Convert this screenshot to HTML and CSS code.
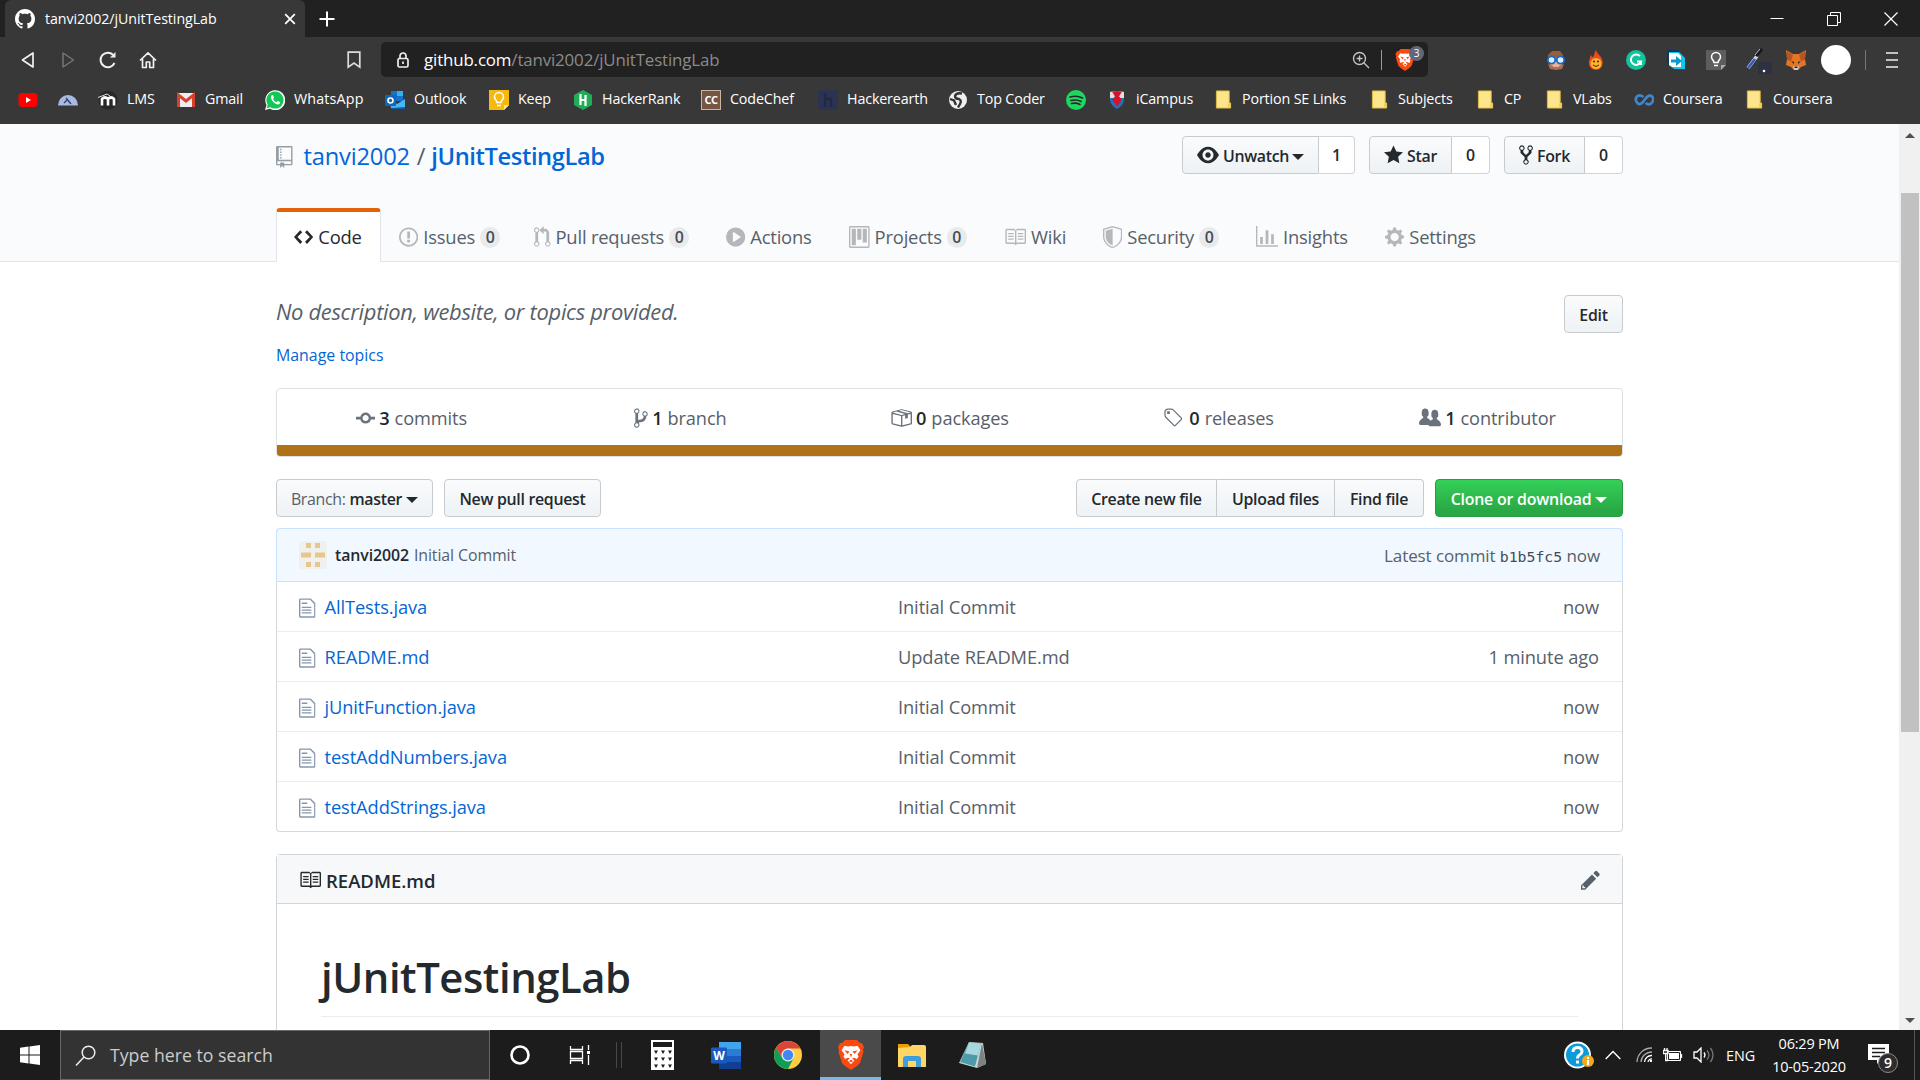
FILE: index.html
```html
<!DOCTYPE html>
<html lang="en">
<head>
<meta charset="utf-8">
<title>tanvi2002/jUnitTestingLab</title>
<link rel="stylesheet" href="styles.css">
</head>
<body>
<svg class="defs" aria-hidden="true">
  <symbol id="file" viewBox="0 0 12 16"><path d="M6 5H2V4h4v1zM2 8h7V7H2v1zm0 2h7V9H2v1zm0 2h7v-1H2v1zm10-7.5V14c0 .55-.45 1-1 1H1c-.55 0-1-.45-1-1V2c0-.55.45-1 1-1h7.5L12 4.5zM11 5L8 2H1v12h10V5z"/></symbol>
  <symbol id="book" viewBox="0 0 16 16"><path d="M3 5h4v1H3V5zm0 3h4V7H3v1zm0 2h4V9H3v1zm11-5h-4v1h4V5zm0 2h-4v1h4V7zm0 2h-4v1h4V9zm2-6v9c0 .55-.45 1-1 1H9.5l-1 1-1-1H2c-.55 0-1-.45-1-1V3c0-.55.45-1 1-1h5.5l1 1 1-1H15c.55 0 1 .45 1 1zm-8 .5L7.5 3H2v9h6V3.5zm7-.5H9.5l-.5.5V12h6V3z"/></symbol>
  <symbol id="folder" viewBox="0 0 17 20"><path d="M1 1h13.500v13h1.500v5h-15z" fill="#fde58c" stroke="#e0b93f" stroke-width="1"/><path d="M13 19v-4l3-2v6z" fill="#f3cf5d"/></symbol>
  <symbol id="brave" viewBox="0 0 26 30"><path d="M7 0h12l3 3 2 0 2 4-1 3 .5 2-3.500 11-3 3-6 4-6-4-3-3L.5 12 1 10 0 7l2-4h2z" fill="#fb4a10"/><path d="M13 6l3 .5 3.500-.7 3 4.500-3 4 1 2.200-1.500 2.500-3-1.200-2 .7 2.500 1.800-3.500 4-3.500-4 2.500-1.800-2-.7-3 1.200-1.500-2.500 1-2.200-3-4 3-4.500L10 6.500z" fill="#fff"/><path d="M6.500 10.200l5 1.300-2 2.500zM19.500 10.200l-5 1.300 2 2.500zM11.800 14h2.400L13 17.500zM11 21l2-1.200 2 1.200-2 1.500z" fill="#fb4a10"/></symbol>
</svg>

<header class="browser">
  <div class="tabstrip">
    <div class="tab">
      <svg width="20" height="20" viewBox="0 0 16 16" fill="#fff"><path d="M8 0C3.580 0 0 3.580 0 8c0 3.540 2.290 6.530 5.470 7.590.4.070.55-.17.55-.38 0-.19-.01-.82-.01-1.490-2.010.37-2.530-.49-2.690-.94-.09-.23-.48-.94-.82-1.130-.28-.15-.68-.52-.01-.53.63-.01 1.080.58 1.230.82.72 1.210 1.870.87 2.330.66.070-.52.28-.87.51-1.070-1.780-.2-3.640-.89-3.640-3.950 0-.87.31-1.590.82-2.150-.08-.2-.36-1.020.08-2.120 0 0 .67-.21 2.200.82.64-.18 1.320-.27 2-.27.68 0 1.360.09 2 .27 1.530-1.040 2.200-.82 2.200-.82.44 1.100.16 1.920.08 2.120.51.56.82 1.270.82 2.150 0 3.070-1.870 3.750-3.650 3.950.29.25.54.73.54 1.480 0 1.070-.01 1.930-.01 2.200 0 .21.15.46.55.38A8.013 8.013 0 0016 8c0-4.420-3.580-8-8-8z"/></svg>
      <span class="tab-title">tanvi2002/jUnitTestingLab</span>
      <svg width="12" height="12" viewBox="0 0 12 12" stroke="#fff" stroke-width="1.800"><path d="M1.200 1.200l9.600 9.600M10.800 1.200l-9.600 9.600"/></svg>
    </div>
    <svg class="new-tab" width="16" height="16" viewBox="0 0 16 16" stroke="#fff" stroke-width="2"><path d="M8 .5v15M.5 8h15"/></svg>
    <div class="window-buttons">
      <svg width="14" height="14" viewBox="0 0 14 14" stroke="#fff"><path d="M.5 6.500h13"/></svg>
      <svg width="14" height="14" viewBox="0 0 14 14" stroke="#fff" fill="none"><path d="M.5 3.500h10v10H.5zM3.500 3.500v-3h10v10h-3"/></svg>
      <svg width="14" height="14" viewBox="0 0 14 14" stroke="#fff" stroke-width="1.200"><path d="M.5.5l13 13M13.500.5l-13 13"/></svg>
    </div>
  </div>

  <div class="toolbar">
    <div class="nav-buttons">
      <svg width="20" height="20" viewBox="0 0 20 20" fill="none" stroke="#f0f0f0" stroke-width="1.700" stroke-linejoin="round"><path d="M15 3v14L4.500 10z"/></svg>
      <svg width="20" height="20" viewBox="0 0 20 20" fill="none" stroke="#757575" stroke-width="1.500" stroke-linejoin="round"><path d="M5 3v14l10.500-7z"/></svg>
      <svg width="20" height="20" viewBox="0 0 20 20" fill="none" stroke="#f0f0f0" stroke-width="2"><path d="M16.500 13A7.300 7.300 0 1 1 15 4.800"/><path d="M12 7.500h5.500V2z" fill="#f0f0f0" stroke="none"/></svg>
      <svg width="20" height="20" viewBox="0 0 20 20" fill="none" stroke="#f0f0f0" stroke-width="1.700" stroke-linejoin="round"><path d="M2 10.500L10 2.800l8 7.700M4.500 9v8.500h3.800V12h3.400v5.500h3.800V9"/></svg>
    </div>
    <svg class="save" width="14" height="18" viewBox="0 0 14 18" fill="none" stroke="#dcdcdc" stroke-width="1.700"><path d="M1.200 1.200h11.600v15L7 12l-5.800 4.200z"/></svg>
    <div class="address">
      <svg width="12" height="16" viewBox="0 0 12 16" fill="none" stroke="#eee" stroke-width="1.700"><rect x="1" y="6.500" width="10" height="8.500" rx="1.500"/><path d="M3 6.500V4a3 3 0 0 1 6 0v2.500M6 9.500v2.500"/></svg>
      <span class="url">github.com<span class="url-path">/tanvi2002/jUnitTestingLab</span></span>
      <svg width="18" height="18" viewBox="0 0 18 18" fill="none" stroke="#c4c4c4" stroke-width="1.400"><circle cx="7.500" cy="7.500" r="6"/><path d="M12 12l5 5M4.500 7.500h6M7.500 4.500v6"/></svg>
      <span class="address-sep"></span>
      <span class="shield"><svg width="20" height="22"><use href="#brave"/></svg><span class="shield-count">3</span></span>
    </div>
    <div class="extensions">
      <svg width="20" height="20" viewBox="0 0 20 20"><path d="M2 10V5l4-4h8l3 4 1 5z" fill="#9a5d39"/><path d="M4 8h12v8l-6 4-6-4z" fill="#f1b08c"/><path d="M2 14l2 5 6 1 6-1 2-5-5 2H7z" fill="#ad6b5b"/><path d="M7 14h6v3H7z" fill="#f1b08c"/><circle cx="5.500" cy="10" r="3.700" fill="#dfeeff" stroke="#1669c5" stroke-width="1.800"/><circle cx="14.500" cy="10" r="3.700" fill="#dfeeff" stroke="#1669c5" stroke-width="1.800"/></svg>
      <svg width="20" height="20" viewBox="0 0 20 20"><path d="M10 0c1 4 6 6 6.500 11 1 6-3 9-6.500 9s-8-3-7-9C4 9 4 6 5 5c1 2 1 2 2 2 2-2 1-5 3-7z" fill="#f04a18"/><circle cx="10" cy="13.500" r="5.500" fill="#ffb526"/><path d="M7 15q3 3 6 0" stroke="#422" fill="none"/><circle cx="8" cy="11.500" r="1" fill="#422"/><circle cx="12" cy="11.500" r="1" fill="#422"/></svg>
      <svg width="20" height="20" viewBox="0 0 20 20"><circle cx="10" cy="10" r="10" fill="#12c29b"/><path d="M14 6.200A5.200 5.200 0 1 0 15 11.500h-4M15 11.500v3.500" fill="none" stroke="#fff" stroke-width="2"/></svg>
      <svg width="20" height="20" viewBox="0 0 20 20"><path d="M1 0h12v3H4v12H1z" fill="#0c3a66"/><path d="M3 2h10l6 6v11H8l-5-4z" fill="#10c8ee"/><path d="M3 3h9l3 3v11H6l-3-2z" fill="#fff"/><path d="M5 9.500h5V6l6 5-6 5v-3.500H5z" fill="#079bce"/></svg>
      <svg width="20" height="20" viewBox="0 0 20 20"><path d="M0 0h20v15l-5 5H0z" fill="#5d5d5d"/><path d="M20 15h-5v5z" fill="#aaa"/><path d="M8 12.500c0-2-2.500-3-2.500-5.500a4.500 4.500 0 0 1 9 0c0 2.500-2.500 3.500-2.500 5.500zM8 15.500h4" fill="none" stroke="#fff" stroke-width="1.500"/></svg>
      <svg width="28" height="28" viewBox="0 0 28 28"><rect x="14" y="16" width="14" height="14" rx="2" fill="#2d3142"/><path d="M4 22L13 10" stroke="#cdd6e8" stroke-width="3.600"/><path d="M4 22l7-9" stroke="#3358c6" stroke-width="2.600"/><path d="M12 10l6-7" stroke="#161616" stroke-width="3"/><path d="M11 9l5-6" stroke="#b8bec9" stroke-width="1"/><circle cx="20" cy="25" r="1.300" fill="#fff"/></svg>
      <svg width="20" height="20" viewBox="0 0 20 20"><path d="M0 0l7 4h6l7-4-1 9 1 6-5 2-3 3H8l-3-3-5-2 1-6z" fill="#e37625"/><path d="M1 1l6 4-2 6-4-1zM19 1l-6 4 2 6 4-1z" fill="#b65622"/><path d="M5 11l3 1 0 2zM15 11l-3 1v2z" fill="#222"/><path d="M7 16h6l-1 4H8z" fill="#d9c7bd"/><path d="M8.500 16.500h3v1.500h-3z" fill="#222"/></svg>
      <span class="profile"></span>
    </div>
    <span class="toolbar-sep"></span>
    <svg width="12" height="18" viewBox="0 0 12 18" stroke="#eee" stroke-width="1.600"><path d="M0 2h12M0 9h12M0 16h12"/></svg>
  </div>

  <nav class="bookmarks">
    <a><svg width="20" height="20" viewBox="0 0 20 20"><rect x=".5" y="3" width="19" height="14" rx="4" fill="#f00"/><path d="M8 7l5 3-5 3z" fill="#fff"/></svg></a>
    <a><svg width="20" height="20" viewBox="0 0 20 20"><path d="M0 15.500a10 10.500 0 0 1 20 0z" fill="#a9b9e4"/><path d="M8 8l5 6M10 9l-4 4" stroke="#39466e" stroke-width="1.500"/></svg></a>
    <a><svg width="20" height="20" viewBox="0 0 20 20"><circle cx="10" cy="10" r="9.500" fill="#282828"/><path d="M4 15.500V9q3-3 6 0v6.500M10 9q3-3 6 0v6.500" stroke="#fff" stroke-width="2.600" fill="none"/><path d="M0 7.500l9-3.500 3 2" stroke="#ddd" fill="none"/></svg><span>LMS</span></a>
    <a><svg width="20" height="20" viewBox="0 0 20 20"><rect x="1" y="3" width="18" height="14" rx="1.500" fill="#eee"/><path d="M2.500 17V5l7.500 6 7.500-6v12" stroke="#d8402f" stroke-width="3" fill="none"/></svg><span>Gmail</span></a>
    <a><svg width="20" height="20" viewBox="0 0 20 20"><path d="M0 20l1.500-5A10 10 0 1 1 5 18.700z" fill="#fff"/><path d="M1.700 18.300l1-3.700A8.600 8.600 0 1 1 5.400 17.300z" fill="#14c655"/><path d="M7 5c-3 2 1 9 6 9.500 1.500 0 2.300-1.500 2-2.500l-2.200-1-1.300 1.200Q9 11.500 8 8.700l1-1L8 5z" fill="#fff"/></svg><span>WhatsApp</span></a>
    <a><svg width="20" height="20" viewBox="0 0 20 20"><path d="M6 1h12v10H6z" fill="#1474cc"/><path d="M12 1h6v5h-6z" fill="#33b0ed"/><path d="M5 10l7 4 8-5v9H6z" fill="#46b8f1"/><path d="M6 18l14-1v2H6z" fill="#155ba8"/><rect y="5" width="11" height="11" rx="1" fill="#0b68bd"/><circle cx="5.500" cy="10.500" r="2.500" fill="none" stroke="#fff" stroke-width="1.600"/></svg><span>Outlook</span></a>
    <a><svg width="20" height="20" viewBox="0 0 20 20"><path d="M0 0h20v15l-5 5H0z" fill="#f7b90e"/><path d="M20 15h-5v5z" fill="#ffe59b"/><path d="M8 12.500c0-2-2.500-3-2.500-5.500a4.500 4.500 0 0 1 9 0c0 2.500-2.500 3.500-2.500 5.500zM8 15.500h4" fill="none" stroke="#fff" stroke-width="1.500"/></svg><span>Keep</span></a>
    <a><svg width="20" height="20" viewBox="0 0 20 20"><path d="M10 0l9 5v10l-9 5-9-5V5z" fill="#1fae56"/><path d="M7.500 4v11M12.500 5v11M7.500 10h5" stroke="#fff" stroke-width="2.200"/></svg><span>HackerRank</span></a>
    <a><svg width="20" height="20" viewBox="0 0 20 20"><rect x=".5" y=".5" width="19" height="19" fill="#765643" stroke="#cbb5a5"/><text x="10" y="13.500" text-anchor="middle" font-size="11" font-weight="700" fill="#fff" letter-spacing="-.5">CC</text></svg><span>CodeChef</span></a>
    <a><svg width="20" height="20" viewBox="0 0 20 20"><rect width="20" height="20" rx="1" fill="#2b3350"/><path d="M7 3v14M7 9h6v8" stroke="#202845" stroke-width="2.500" fill="none"/></svg><span>Hackerearth</span></a>
    <a><svg width="20" height="20" viewBox="0 0 20 20"><circle cx="10" cy="10" r="9" fill="#efefef"/><path d="M14 3.500q-6-1-7 2.500 0 3 4 3 3 1.500 1 5l-2 3.500M2 9l4 1.500L8 15" stroke="#333" stroke-width="2.400" fill="none"/></svg><span>Top Coder</span></a>
    <a><svg width="20" height="20" viewBox="0 0 20 20"><circle cx="10" cy="10" r="10" fill="#1ed760"/><path d="M4 7q7-2 12.500 1M5 10.500q6-1.500 10 1M5.500 13.500q5-1 8.500 1" stroke="#272727" stroke-width="1.600" fill="none" stroke-linecap="round"/></svg></a>
    <a><svg width="20" height="20" viewBox="0 0 20 20"><path d="M3 2q7-2 14 0v8q-1 6-7 9-6-3-7-9z" fill="#2472b6"/><path d="M3 2q7-2 14 0v6H3z" fill="#e2ded9"/><path d="M5 1.500q5-1 10 0l-3 5 3 3-5 7-5-7 3-3z" fill="#d2142d"/></svg><span>iCampus</span></a>
    <a class="dir"><svg width="19" height="19"><use href="#folder"/></svg><span>Portion SE Links</span></a>
    <a class="dir"><svg width="19" height="19"><use href="#folder"/></svg><span>Subjects</span></a>
    <a class="dir"><svg width="19" height="19"><use href="#folder"/></svg><span>CP</span></a>
    <a class="dir"><svg width="19" height="19"><use href="#folder"/></svg><span>VLabs</span></a>
    <a><svg width="20" height="20" viewBox="0 0 20 20"><path d="M9.500 7q-4-3-6.500-.5t0 6 6-.5l3-4q3.500-4 6-1.500t0 6-6.500.5" fill="none" stroke="#3f86cc" stroke-width="2.700"/></svg><span>Coursera</span></a>
    <a class="dir"><svg width="19" height="19"><use href="#folder"/></svg><span>Coursera</span></a>
  </nav>
</header>

<div class="viewport">
<main class="page">
  <section class="repo-head">
    <div class="title-row">
      <svg class="repo-icon" width="16.500" height="22" viewBox="0 0 12 16"><path d="M4 9H3V8h1v1zm0-3H3v1h1V6zm0-2H3v1h1V4zm0-2H3v1h1V2zm8-1v12c0 .55-.45 1-1 1H6v2l-1.500-1.500L3 16v-2H1c-.55 0-1-.45-1-1V1c0-.55.45-1 1-1h10c.55 0 1 .45 1 1zm-1 10H1v2h2v-1h3v1h5v-2zm0-10H2v9h9V1z"/></svg>
      <h1 class="repo-title"><a>tanvi2002</a><span class="slash">/</span><a class="repo-name">jUnitTestingLab</a></h1>
      <div class="social">
        <div class="group unwatch"><span class="btn"><svg width="22" height="22" viewBox="0 0 16 16"><path d="M8.060 2C3 2 0 8 0 8s3 6 8.060 6C13 14 16 8 16 8s-3-6-7.940-6zM8 12c-2.200 0-4-1.780-4-4 0-2.200 1.800-4 4-4 2.220 0 4 1.800 4 4 0 2.220-1.780 4-4 4zm2-4c0 1.110-.89 2-2 2-1.110 0-2-.89-2-2 0-1.110.89-2 2-2 1.110 0 2 .89 2 2z"/></svg>Unwatch<i class="caret"></i></span><span class="count">1</span></div>
        <div class="group star"><span class="btn"><svg width="19" height="22" viewBox="0 0 14 16"><path d="M14 6l-4.900-.64L7 1 4.900 5.360 0 6l3.600 3.260L2.670 14 7 11.670 11.330 14l-.93-4.740L14 6z"/></svg>Star</span><span class="count">0</span></div>
        <div class="group fork"><span class="btn"><svg width="14" height="22" viewBox="0 0 10 16"><path d="M8 1a1.993 1.993 0 00-1 3.720V6L5 8 3 6V4.720A1.993 1.993 0 002 1a1.993 1.993 0 00-1 3.720V6.500l3 3v1.780A1.993 1.993 0 005 15a1.993 1.993 0 001-3.720V9.500l3-3V4.720A1.993 1.993 0 008 1zM2 4.200C1.340 4.200.8 3.650.8 3c0-.65.55-1.200 1.200-1.200.65 0 1.200.55 1.200 1.200 0 .65-.55 1.200-1.200 1.200zm3 10c-.66 0-1.200-.55-1.200-1.200 0-.65.55-1.200 1.200-1.200.65 0 1.200.55 1.200 1.200 0 .65-.55 1.200-1.200 1.200zm3-10c-.66 0-1.200-.55-1.200-1.200 0-.65.55-1.200 1.200-1.200.65 0 1.200.55 1.200 1.200 0 .65-.55 1.200-1.200 1.200z"/></svg>Fork</span><span class="count">0</span></div>
      </div>
    </div>
    <nav class="repo-nav">
      <a class="selected"><svg width="19.250" height="22" viewBox="0 0 14 16"><path d="M9.500 3L8 4.500 11.500 8 8 11.500 9.500 13 14 8 9.500 3zm-5 0L0 8l4.500 5L6 11.500 2.500 8 6 4.500 4.500 3z"/></svg><span>Code</span></a>
      <a><svg width="19.250" height="22" viewBox="0 0 14 16"><path d="M7 2.300c3.140 0 5.700 2.560 5.700 5.700s-2.560 5.700-5.700 5.700A5.710 5.710 0 011.300 8c0-3.140 2.560-5.700 5.700-5.700zM7 1C3.140 1 0 4.140 0 8s3.140 7 7 7 7-3.140 7-7-3.140-7-7-7zm1 3H6v5h2V4zm0 6H6v2h2v-2z"/></svg><span>Issues</span><b>0</b></a>
      <a class="pulls"><svg width="16.500" height="22" viewBox="0 0 12 16"><path d="M11 11.280V5c-.03-.78-.34-1.470-.94-2.060C9.460 2.350 8.780 2.030 8 2H7V0L4 3l3 3V4h1c.27.02.48.11.69.31.21.2.3.42.31.69v6.280A1.993 1.993 0 0010 15a1.993 1.993 0 001-3.720zm-1 2.920c-.66 0-1.200-.55-1.200-1.200 0-.65.55-1.200 1.200-1.200.65 0 1.200.55 1.200 1.200 0 .65-.55 1.200-1.200 1.200zM4 3c0-1.110-.89-2-2-2a1.993 1.993 0 00-1 3.720v6.560A1.993 1.993 0 002 15a1.993 1.993 0 001-3.720V4.720c.59-.34 1-.98 1-1.720zm-.8 10c0 .66-.55 1.200-1.200 1.200-.65 0-1.200-.55-1.200-1.200 0-.65.55-1.200 1.200-1.200.65 0 1.200.55 1.200 1.200zM2 4.200C1.340 4.200.8 3.650.8 3c0-.65.55-1.200 1.200-1.200.65 0 1.200.55 1.200 1.200 0 .65-.55 1.200-1.200 1.200z"/></svg><span>Pull requests</span><b>0</b></a>
      <a><svg width="19.250" height="22" viewBox="0 0 14 16"><path d="M14 8A7 7 0 110 8a7 7 0 0114 0zm-8.223 3.482l4.599-3.066a.5.5 0 000-.832L5.777 4.518A.5.5 0 005 4.934v6.132a.5.5 0 00.777.416z"/></svg><span>Actions</span></a>
      <a><svg width="20.600" height="22" viewBox="0 0 15 16"><path fill-rule="evenodd" d="M10 12h3V2h-3v10zm-4-2h3V2H6v8zm-4 4h3V2H2v12zm-1 1h13V1H1v14zM14 0H1a1 1 0 00-1 1v14a1 1 0 001 1h13a1 1 0 001-1V1a1 1 0 00-1-1z"/></svg><span>Projects</span><b>0</b></a>
      <a><svg width="22" height="22"><use href="#book"/></svg><span>Wiki</span></a>
      <a><svg width="19.250" height="22" viewBox="0 0 14 16"><path fill-rule="evenodd" d="M0 2l7-2 7 2v6.020C14 12.690 8.690 16 7 16c-1.690 0-7-3.310-7-7.980V2zm1 .75L7 1l6 1.750v5.268C13 12.104 8.449 15 7 15c-1.449 0-6-2.896-6-6.982V2.750zm1 .75L7 2v12c-1.207 0-5-2.482-5-5.985V3.500z"/></svg><span>Security</span><b>0</b></a>
      <a><svg width="22" height="22" viewBox="0 0 16 16"><path d="M16 14v1H0V0h1v14h15zM5 13H3V8h2v5zm4 0H7V3h2v10zm4 0h-2V6h2v7z"/></svg><span>Insights</span></a>
      <a><svg width="19.250" height="22" viewBox="0 0 14 16"><path d="M14 8.770v-1.600l-1.940-.64-.45-1.090.88-1.840-1.130-1.130-1.810.91-1.090-.45-.69-1.920h-1.600l-.63 1.940-1.110.45-1.840-.88-1.130 1.130.91 1.810-.45 1.090L0 7.230v1.590l1.940.64.45 1.090-.88 1.840 1.130 1.130 1.810-.91 1.090.45.69 1.920h1.590l.63-1.940 1.110-.45 1.840.88 1.130-1.130-.92-1.810.47-1.090L14 8.750v.02zM7 11c-1.660 0-3-1.340-3-3s1.340-3 3-3 3 1.340 3 3-1.340 3-3 3z"/></svg><span>Settings</span></a>
    </nav>
  </section>

  <section class="content">
    <div class="about"><em>No description, website, or topics provided.</em><span class="btn edit">Edit</span></div>
    <a class="topics">Manage topics</a>

    <div class="summary">
      <div class="numbers">
        <span><svg width="19.250" height="22" viewBox="0 0 14 16"><path d="M10.860 7c-.45-1.720-2-3-3.860-3-1.860 0-3.410 1.280-3.860 3H0v2h3.140c.45 1.720 2 3 3.860 3 1.860 0 3.410-1.280 3.860-3H14V7h-3.140zM7 10.200c-1.220 0-2.200-.98-2.200-2.200 0-1.220.98-2.200 2.200-2.200 1.220 0 2.200.98 2.200 2.200 0 1.220-.98 2.200-2.200 2.200z"/></svg><b>3</b> commits</span>
        <span><svg width="13.750" height="22" viewBox="0 0 10 16"><path d="M10 5c0-1.110-.89-2-2-2a1.993 1.993 0 00-1 3.720v.3c-.02.52-.23.98-.63 1.380-.4.4-.86.61-1.380.63-.83.02-1.480.16-2 .45V4.720a1.993 1.993 0 00-1-3.720C.88 1 0 1.890 0 3a2 2 0 001 1.720v6.560c-.59.35-1 .99-1 1.720 0 1.110.89 2 2 2 1.110 0 2-.89 2-2 0-.53-.2-1-.53-1.360.09-.06.48-.41.59-.47.25-.11.56-.17.94-.17 1.050-.05 1.950-.45 2.750-1.250S8.950 7.770 9 6.730h-.02C9.590 6.370 10 5.730 10 5zM2 1.800c.66 0 1.200.55 1.200 1.200 0 .65-.55 1.200-1.200 1.200C1.350 4.200.8 3.650.8 3c0-.65.55-1.200 1.200-1.200zm0 12.410c-.66 0-1.200-.55-1.200-1.200 0-.65.55-1.200 1.200-1.200.65 0 1.200.55 1.200 1.200 0 .65-.55 1.200-1.200 1.200zm6-8c-.66 0-1.200-.55-1.200-1.200 0-.65.55-1.200 1.200-1.200.65 0 1.200.55 1.200 1.200 0 .65-.55 1.200-1.200 1.200z"/></svg><b>1</b> branch</span>
        <span><svg width="22" height="22" viewBox="0 0 16 16"><path d="M1 4.270v7.470c0 .45.3.84.75.97l6.500 1.730c.16.05.34.05.5 0l6.500-1.730c.45-.13.75-.52.75-.97V4.270c0-.45-.3-.84-.75-.97l-6.500-1.740a1.400 1.400 0 00-.5 0L1.750 3.300c-.45.13-.75.52-.75.97zm7 9.090l-6-1.590V5l6 1.610v6.750zM2 4l2.500-.67L11 5.060l-2.500.67L2 4zm13 7.770l-6 1.590V6.610l2-.55V8.500l2-.53V5.530L15 5v6.770zm-2-7.240L6.500 2.800l2-.53L15 4l-2 .53z"/></svg><b>0</b> packages</span>
        <span class="releases"><svg width="19.250" height="22" viewBox="0 0 14 16"><path d="M7.730 1.730C7.260 1.260 6.620 1 5.960 1H3.500C2.130 1 1 2.130 1 3.500v2.470c0 .66.27 1.300.73 1.770l6.060 6.060c.39.39 1.020.39 1.410 0l4.590-4.590a.996.996 0 000-1.410L7.730 1.730zM2.380 7.090c-.31-.3-.47-.7-.47-1.130V3.500c0-.88.72-1.590 1.590-1.590h2.470c.42 0 .83.16 1.130.47l6.140 6.130-4.730 4.730-6.130-6.150zM3.010 3h2v2H3V3h.01z"/></svg><b>0</b> releases</span>
        <span><svg width="22" height="22" viewBox="0 0 16 16"><path d="M16 12.999c0 .439-.45 1-1 1H7.995c-.539 0-.994-.447-.995-.999H1c-.54 0-1-.561-1-1 0-2.634 3-4 3-4s.229-.409 0-1c-.841-.621-1.058-.59-1-3 .058-2.419 1.367-3 2.500-3s2.442.58 2.500 3c.058 2.410-.159 2.379-1 3-.229.59 0 1 0 1s1.549.711 2.420 2.088C9.196 9.369 10 8.999 10 8.999s.229-.409 0-1c-.841-.62-1.058-.59-1-3 .058-2.419 1.367-3 2.500-3s2.437.581 2.495 3c.059 2.410-.158 2.380-1 3-.229.59 0 1 0 1s3.005 1.366 3.005 4z"/></svg><b>1</b> contributor</span>
      </div>
      <div class="language-bar"></div>
    </div>

    <div class="actions">
      <span class="btn branch"><span>Branch:</span>&nbsp;master<i class="caret"></i></span>
      <span class="btn new-pr">New pull request</span>
      <div class="file-buttons"><span class="btn">Create new file</span><span class="btn">Upload files</span><span class="btn">Find file</span></div>
      <span class="btn primary">Clone or download<i class="caret"></i></span>
    </div>

    <div class="files">
      <div class="commit">
        <svg width="28" height="28" viewBox="0 0 28 28"><rect width="28" height="28" rx="3" fill="#f0f0f0"/><path d="M7 2h5v5H7zM16 2h5v5h-5zM2 11.500h10v5H2zM16 11.500h10v5H16zM7 21h5v5H7zM16 21h5v5h-5z" fill="#e5c88a"/></svg>
        <strong>tanvi2002</strong><span>Initial Commit</span>
        <span class="latest">Latest commit <code>b1b5fc5</code> now</span>
      </div>
      <div class="file"><a><svg width="16.500" height="22"><use href="#file"/></svg>AllTests.java</a><span>Initial Commit</span><time>now</time></div>
      <div class="file"><a><svg width="16.500" height="22"><use href="#file"/></svg>README.md</a><span>Update README.md</span><time>1 minute ago</time></div>
      <div class="file"><a><svg width="16.500" height="22"><use href="#file"/></svg>jUnitFunction.java</a><span>Initial Commit</span><time>now</time></div>
      <div class="file"><a><svg width="16.500" height="22"><use href="#file"/></svg>testAddNumbers.java</a><span>Initial Commit</span><time>now</time></div>
      <div class="file"><a><svg width="16.500" height="22"><use href="#file"/></svg>testAddStrings.java</a><span>Initial Commit</span><time>now</time></div>
    </div>

    <article class="readme">
      <header><svg width="22" height="22"><use href="#book"/></svg><h3>README.md</h3><svg class="pencil" width="19.250" height="22" viewBox="0 0 14 16"><path d="M0 12v3h3l8-8-3-3-8 8zm3 2H1v-2h1v1h1v1zm10.300-9.300L12 6 9 3l1.300-1.300a.996.996 0 011.410 0l1.590 1.590c.39.39.39 1.020 0 1.410z"/></svg></header>
      <h1>jUnitTestingLab</h1>
    </article>
  </section>
</main>
<aside class="scrollbar"><i class="up"></i><div class="thumb"></div><i class="down"></i></aside>
</div>

<footer class="taskbar">
  <div class="start"><svg width="20" height="20" viewBox="0 0 20 20" fill="#fff"><path d="M0 2.800l8.500-1.200v8H0zM9.500 1.500L20 0v9.600H9.500zM0 10.500h8.500v8L0 17.300zM9.500 10.500H20V20L9.500 18.600z"/></svg></div>
  <div class="search"><svg width="21" height="21" viewBox="0 0 21 21" fill="none" stroke="#eee" stroke-width="1.500"><circle cx="13.500" cy="7.500" r="6.300"/><path d="M9 12l-8 8.500"/></svg><span>Type here to search</span></div>
  <div class="apps">
    <span><svg width="20" height="20" viewBox="0 0 20 20" fill="none" stroke="#fff" stroke-width="2.600"><circle cx="10" cy="10" r="8.500"/></svg></span>
    <span><svg width="22" height="20" viewBox="0 0 22 20" fill="none" stroke="#fff" stroke-width="1.300"><path d="M1.500 1v3.500h12V1M1.500 19v-3.500h12V19M1.500 6.500h12v7h-12zM19.500 0v5M19.500 10v10"/><path d="M18 6h3v3h-3z" fill="#fff" stroke="none"/></svg></span>
    <span class="bars"></span>
    <span><svg width="23" height="30" viewBox="0 0 23 30"><path d="M0 0h23v30H0z" fill="#fff"/><path d="M2 2h19v5H2z" fill="#1d1d1d"/><path d="M3 10.500h4L5 14zM10 10.500h4L12 14zM17 10.500h4L19 14zM3 17.500h4L5 21zM10 17.500h4L12 21zM17 17.500h4L19 21zM3 24.500h4L5 28zM10 24.500h4L12 28zM17 24.500h4L19 28z" fill="#1d1d1d"/></svg></span>
    <span><svg width="30" height="27" viewBox="0 0 30 27"><path d="M8 0h22v7H8z" fill="#41a5ee"/><path d="M8 7h22v7H8z" fill="#2b7cd3"/><path d="M8 14h22v6H8z" fill="#185abd"/><path d="M8 20h22v7H8z" fill="#103f91"/><rect y="5.500" width="16" height="16" rx="1" fill="#185abd"/><text x="8" y="18" text-anchor="middle" font-size="12" font-weight="700" fill="#fff">W</text></svg></span>
    <span><svg width="28" height="28" viewBox="0 0 28 28"><circle cx="14" cy="14" r="14" fill="#ffcd40"/><path d="M14 7.500h12.400L26.100 7A14 14 0 0 0 1.900 7l6.500 10z" fill="#db4437"/><path d="M1.900 7A14 14 0 0 0 14 28l5.700-11L14 20l-5.600-3z" fill="#0f9d58"/><circle cx="14" cy="14" r="6.500" fill="#f1f1f1"/><circle cx="14" cy="14" r="5.200" fill="#4285f4"/></svg></span>
    <span class="active"><svg width="26" height="30"><use href="#brave"/></svg></span>
    <span><svg width="28" height="24" viewBox="0 0 28 24"><path d="M0 1h10l3 3h-2v4H0z" fill="#e6a100"/><path d="M0 5l12-1 2-2h12q2 0 2 2v20H0z" fill="#ffd664"/><path d="M5 24v-8q0-3 3-3h12q3 0 3 3v8h-5v-6h-8v6z" fill="#3e9ddd"/></svg></span>
    <span><svg width="28" height="28" viewBox="0 0 28 28"><path d="M10 1l14 1 3 21-9 4L0 22z" fill="#cfd5d4"/><path d="M23 2l4 21-9 4z" fill="#7d8384"/><path d="M10 1.500l12 1-6 23L1 21z" fill="#4c9bab"/><path d="M10 1.500l12 1-3 12-13-2z" fill="#a5d8df"/></svg></span>
  </div>
  <div class="tray">
    <svg width="30" height="28" viewBox="0 0 30 28"><circle cx="13.500" cy="14" r="13.500" fill="#fff"/><circle cx="13.500" cy="14" r="11.500" fill="#0b9bd8"/><path d="M9 11q0-4.500 4.500-4.500T18 10.500q0 2-2.500 3.500-2 1-2 3.500M13.500 19.500v3" fill="none" stroke="#fff" stroke-width="3"/><circle cx="24" cy="20" r="6" fill="#f4a81c"/><path d="M24 16v2M24 19v5" stroke="#fff" stroke-width="2"/></svg>
    <svg width="16" height="10" viewBox="0 0 16 10" fill="none" stroke="#fff" stroke-width="1.400"><path d="M.7 9L8 1.500 15.300 9"/></svg>
    <svg width="17" height="16" viewBox="0 0 17 16" fill="none" stroke-width="1.300"><path d="M1 15A14.500 14.500 0 0 1 16 1M5 15A10.500 10.500 0 0 1 16 5" stroke="#aaa"/><path d="M8.500 15A7 7 0 0 1 16 8.500M12 15a3.500 3.500 0 0 1 4-3" stroke="#fff"/><path d="M14 13h2v2h-2z" fill="#fff"/></svg>
    <svg width="20" height="14" viewBox="0 0 20 14"><path d="M4.500 3.500h13v9H4.500z" fill="#fff" stroke="#fff"/><path d="M5.500 4.500h11v7h-11z" fill="#fff" stroke="#1d1d1d"/><path d="M18.500 6v4M0 2.500h5v3H.5zM1.500 0v3M4 0v3M2.700 5v7.500h2" stroke="#fff" fill="none" stroke-width="1.300"/></svg>
    <svg width="21" height="16" viewBox="0 0 21 16" fill="none" stroke="#fff" stroke-width="1.300"><path d="M1 5h3l4-4v14l-4-4H1z"/><path d="M11 5.500q2 2.500 0 5"/><path d="M14 3.500q4 4.500 0 9M17.500 1q5 7 0 14" stroke="#777"/></svg>
    <span class="lang">ENG</span>
    <div class="clock"><span>06:29 PM</span><span>10-05-2020</span></div>
    <div class="notice"><svg width="21" height="22" viewBox="0 0 21 22"><path d="M0 0h21v16H12l-3 4v-4H0z" fill="#fff"/><path d="M4 4.500h13M4 8.500h13M4 12.500h8" stroke="#1d1d1d" stroke-width="1.300"/></svg><span class="badge">9</span></div>
    <span class="show-desktop"></span>
  </div>
</footer>
</body>
</html>
```
FILE: styles.css
```css
* { box-sizing: border-box; }
body {
  margin: 0;
  width: 1920px;
  height: 1080px;
  overflow: hidden;
  display: flex;
  flex-direction: column;
  font-family: "Open Sans", "Noto Sans", sans-serif;
  color: #24292e;
}
svg { display: block; flex: none; fill: currentColor; }
svg[fill="none"] { fill: none; }
h1, h3 { margin: 0; font-weight: 600; }
.defs { position: absolute; width: 0; height: 0; }

/* browser chrome */
.browser { height: 124px; background: #383838; color: #fff; flex: none; }
.tabstrip { height: 37px; background: #212121; display: flex; align-items: center; padding-left: 5px; }
.tab { width: 300px; height: 37px; background: #383838; border-radius: 6px 6px 0 0; display: flex; align-items: center; padding: 0 9px 0 10px; }
.tab-title { flex: 1; padding-left: 10px; font-size: 14.200px; letter-spacing: -.05px; }
.new-tab { margin-left: 14px; }
.window-buttons { margin-left: auto; display: flex; gap: 43px; padding-right: 22px; }
.toolbar { height: 45px; display: flex; align-items: center; padding: 0 22px 0 18px; }
.nav-buttons { display: flex; gap: 20px; width: 329px; }
.save { margin-right: 20px; }
.address { width: 1047px; height: 35px; border-radius: 5px; background: #212121; display: flex; align-items: center; padding: 0 4px 0 16px; }
.url { flex: 1; padding-left: 15px; font-size: 16.900px; letter-spacing: -.15px; }
.url-path { color: #8b8b8b; }
.address-sep { width: 1px; height: 20px; background: #999; margin: 0 13px 0 11px; }
.shield { position: relative; width: 29px; height: 22px; }
.shield-count { position: absolute; left: 14px; top: -3px; width: 15px; height: 15px; border-radius: 50%; background: #626778; font-size: 10px; line-height: 15px; text-align: center; }
.extensions { display: flex; align-items: center; gap: 20px; margin-left: 118px; }
.extensions svg:nth-child(6) { margin: 0 -6px 0 -2px; }
.profile { width: 30px; height: 30px; border-radius: 50%; background: #fff; margin-left: -5px; }
.toolbar-sep { width: 1px; height: 20px; background: #777; margin: 0 auto 0 14px; }
.bookmarks { height: 35px; padding-left: 18px; display: grid; grid-template-columns: 40px 40px 78px 89px 120px 104px 84px 128px 117px 130px 118px 41px 107px 156px 106px 69px 89px 111px 100px; align-items: center; font-size: 14.300px; letter-spacing: -.15px; }
.bookmarks a { display: flex; gap: 10px; align-items: center; white-space: nowrap; }
.bookmarks span { margin: -2px 0 0 -1px; }
.bookmarks a:nth-child(5) { letter-spacing: .15px; }

/* page */
.viewport { height: 906px; flex: none; display: flex; overflow: hidden; }
.page { width: 1899px; background: #fff; }
.scrollbar { width: 21px; background: #f0f0f0; display: flex; flex-direction: column; align-items: center; }
.scrollbar i { border: 5px solid transparent; border-top: 0; border-bottom-color: #505050; margin-top: 9px; }
.scrollbar .thumb { width: 18px; height: 539px; margin-top: 55px; background: #c1c1c1; }
.scrollbar .down { border: 5px solid transparent; border-bottom: 0; border-top-color: #505050; margin: auto 0 7px; }
.repo-head { height: 138px; background: #fafbfc; border-bottom: 1px solid #e1e4e8; padding: 12px 276px 0; display: flex; flex-direction: column; }
.title-row { display: flex; align-items: center; height: 38px; }
.repo-icon { color: #959da5; margin-top: 4px; }
.repo-title { font-size: 23.700px; font-weight: 400; padding: 2px 0 0 11px; color: #586069; letter-spacing: -.2px; }
.repo-title a, .topics, .file a { color: #0366d6; }
.repo-title .repo-name { font-weight: 600; letter-spacing: -.4px; }
.slash { margin: 0 6px 0 7px; }
.btn { display: flex; align-items: center; justify-content: center; height: 38px; padding-top: 1px; border: 1px solid #c8cbce; border-radius: 4px; background: linear-gradient(#fafbfc, #eff3f6 90%); font-size: 15.900px; font-weight: 570; letter-spacing: -.3px; white-space: nowrap; }
.caret { border: 6px solid transparent; border-top-color: currentColor; border-bottom: 0; margin: 3px 0 0 4px; }
.social { margin-left: auto; display: flex; gap: 14px; }
.group { display: flex; }
.group .btn { flex: 1; border-radius: 4px 0 0 4px; gap: 4px; }
.group .btn svg { margin-top: -2px; }
.group .caret { margin-left: -1px; }
.count { height: 38px; border: 1px solid #d1d3d6; border-left: 0; border-radius: 0 4px 4px 0; background: #fff; font-size: 15.900px; font-weight: 570; width: 36px; line-height: 37px; text-align: center; }
.unwatch { width: 173px; }
.star { width: 121px; }
.star .count { width: 38px; }
.fork { width: 119px; }
.fork .count { width: 38px; }
.repo-nav { margin-top: auto; margin-bottom: -1px; height: 54px; display: grid; grid-template-columns: 123px 135px 192px 123px 155px 99px 153px 129px 100px; font-size: 18.400px; letter-spacing: -.2px; color: #586069; }
.repo-nav a { display: flex; align-items: center; gap: 5px; padding-top: 4px; white-space: nowrap; }
.repo-nav a span { margin-top: -2px; }
.repo-nav svg { color: #b5b8bb; }
.repo-nav .selected { width: 105px; background: #fff; border: 1px solid #e1e4e8; border-top: 4px solid #e36209; border-bottom: 0; border-radius: 4px 4px 0 0; color: #24292e; padding: 0 0 0 17px; }
.repo-nav .selected svg { color: #24292e; }
.repo-nav b { min-width: 20px; height: 21px; border-radius: 11px; background: #e8eaec; color: #444d56; font-size: 15.900px; line-height: 21px; font-weight: 570; text-align: center; }
.content { width: 1347px; margin-left: 276px; }
.about { display: flex; justify-content: space-between; align-items: center; height: 38px; margin-top: 33px; color: #586069; font-size: 21.900px; }
.about em { letter-spacing: -.3px; margin-top: -5px; }
.edit { width: 59px; color: #24292e; }
.topics { display: block; margin-top: 10px; height: 24px; line-height: 24px; font-size: 15.900px; }
.summary { margin-top: 21px; height: 69px; border: 1px solid #dfe2e5; border-radius: 4px; overflow: hidden; display: flex; flex-direction: column; }
.numbers { flex: 1; display: grid; grid-template-columns: repeat(5, 1fr); font-size: 18.200px; letter-spacing: -.1px; color: #586069; padding-top: 2px; }
.numbers span { display: flex; align-items: center; justify-content: center; }
.numbers b { color: #24292e; font-weight: 600; margin: 0 5px 0 4px; }
.numbers .releases b { margin-left: 7px; }
.numbers svg { color: #6a737d; }
.language-bar { height: 11px; background: #b07219; }
.actions { display: flex; margin-top: 22px; }
.branch { width: 157px; }
.branch span { color: #586069; font-weight: 400; }
.new-pr { width: 157px; margin-left: 11px; }
.file-buttons { display: grid; grid-template-columns: 141px 118px 89px; margin-left: auto; }
.file-buttons .btn { border-radius: 0; }
.file-buttons .btn + .btn { border-left: 0; }
.file-buttons .btn:first-child { border-radius: 4px 0 0 4px; }
.file-buttons .btn:last-child { border-radius: 0 4px 4px 0; }
.primary { width: 188px; margin-left: 11px; background: linear-gradient(#34d058, #28a745 90%); border-color: #2a9b42; color: #fff; letter-spacing: -.2px; }
.files { margin-top: 11px; border: 1px solid #d6d8da; border-top: 0; border-radius: 4px; color: #586069; }
.commit { height: 54px; margin: 0 -1px; border: 1px solid #c8e1ff; border-radius: 4px 4px 0 0; background: #f1f8ff; display: flex; align-items: center; padding: 0 22px; font-size: 15.900px; letter-spacing: -.1px; }
.commit strong { font-weight: 570; color: #24292e; margin: 0 5px 0 8px; letter-spacing: -.1px; }
.latest { margin-left: auto; font-size: 17px; }
.commit code { font: 14.800px "DejaVu Sans Mono", monospace; color: #444d56; letter-spacing: 0; }
.file { height: 50px; border-bottom: 1px solid #eaecef; display: grid; grid-template-columns: 599px 1fr auto; align-items: center; padding: 0 23px 0 22px; font-size: 18.300px; letter-spacing: -.1px; }
.file:last-child { border-bottom: 0; height: 49px; }
.file a { display: flex; align-items: center; gap: 9px; }
.file svg { color: #8496ad; margin-top: 2px; }
.readme { margin-top: 22px; height: 200px; border: 1px solid #d1d5da; border-radius: 4px 4px 0 0; }
.readme header { height: 49px; background: #f6f8fa; border-bottom: 1px solid #d1d5da; display: flex; align-items: center; padding: 2px 22px 0; }
.readme h3 { font-size: 18.500px; font-weight: 570; padding-left: 5px; letter-spacing: 0; }
.pencil { margin-left: auto; color: #586069; }
.readme h1 { margin: 42px 44px 0; height: 71px; padding-top: 3px; font-size: 41.800px; line-height: 56px; letter-spacing: -.45px; border-bottom: 1px solid #eaecef; }

/* taskbar */
.taskbar { height: 50px; flex: none; background: #1c1c1c; display: flex; color: #fff; }
.start { width: 60px; display: flex; align-items: center; padding-left: 20px; }
.search { width: 430px; background: #333; border: 1px solid #686868; display: flex; align-items: center; gap: 14px; padding-left: 14px; font-size: 17.700px; color: #ccc; }
.apps { display: grid; grid-template-columns: 60px 59px 19px 68px 60px 64px 61px 61px 62px; }
.apps > span { display: flex; align-items: center; justify-content: center; }
.apps .bars::before { content: ""; width: 4px; height: 26px; border: 1px solid #484848; border-width: 0 1px; }
.apps .active { background: #4a4a4a; border-bottom: 3px solid #76b9ed; padding-top: 3px; }
.tray { margin-left: auto; display: flex; align-items: center; }
.tray > svg:nth-child(2) { margin: 0 15px 0 11px; }
.tray > svg:nth-child(4) { margin: 0 10px; }
.lang { font-size: 14.400px; margin-left: 12px; width: 32px; }
.clock { width: 102px; display: grid; text-align: center; font-size: 14.500px; line-height: 23px; letter-spacing: -.2px; }
.notice { position: relative; width: 46px; margin-left: 8px; height: 22px; }
.show-desktop { width: 6px; height: 50px; border-left: 1px solid #555; }
.badge { position: absolute; left: 10px; top: 9px; width: 20px; height: 20px; border: 1px solid #8a8a8a; border-radius: 50%; background: #2d2d2d; font-size: 14px; font-weight: 600; line-height: 18px; text-align: center; }
```
